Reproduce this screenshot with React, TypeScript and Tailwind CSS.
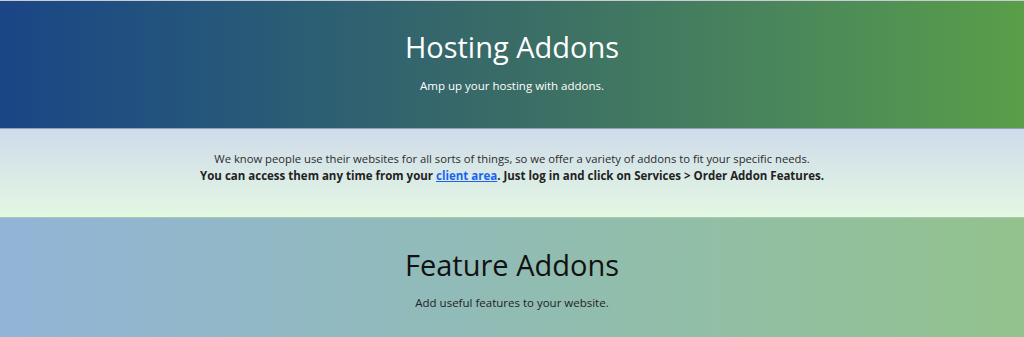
export default function App() {
  return (
    <div className="w-full font-['Open_Sans',sans-serif]">
      <div className="border-t border-[#c9ccd2] h-[128px] flex flex-col items-center bg-gradient-to-r from-[#1b4586] via-[#3a6c66] to-[#5a9e48] text-white">
        <h1 className="mt-[27px] text-[29px] leading-[38px] font-normal">Hosting Addons</h1>
        <p className="mt-[12px] text-[11.5px] leading-[16px]">Amp up your hosting with addons.</p>
      </div>
      <div className="border-t border-[#8ea4bc] h-[89px] flex flex-col items-center bg-gradient-to-b from-[#cfdbea] to-[#e4f8e3] leading-[17px] text-[#2b2b2b]">
        <p className="mt-[21px] text-[11.25px]">We know people use their websites for all sorts of things, so we offer a variety of addons to fit your specific needs.</p>
        <p className="text-[11.5px] font-bold text-[#222]">
          You can access them any time from your <a href="#" className="text-[#1a63f0] underline">client area</a>. Just log in and click on Services &gt; Order Addon Features.
        </p>
      </div>
      <div className="border-t border-[#a9c9b0] h-[120px] flex flex-col items-center bg-gradient-to-r from-[#92b4d7] via-[#91bcb4] to-[#93c28d] text-[#111]">
        <h2 className="mt-[28px] text-[29px] leading-[38px] font-normal">Feature Addons</h2>
        <p className="mt-[11px] text-[11.5px] leading-[16px] text-[#222]">Add useful features to your website.</p>
      </div>
    </div>
  )
}
